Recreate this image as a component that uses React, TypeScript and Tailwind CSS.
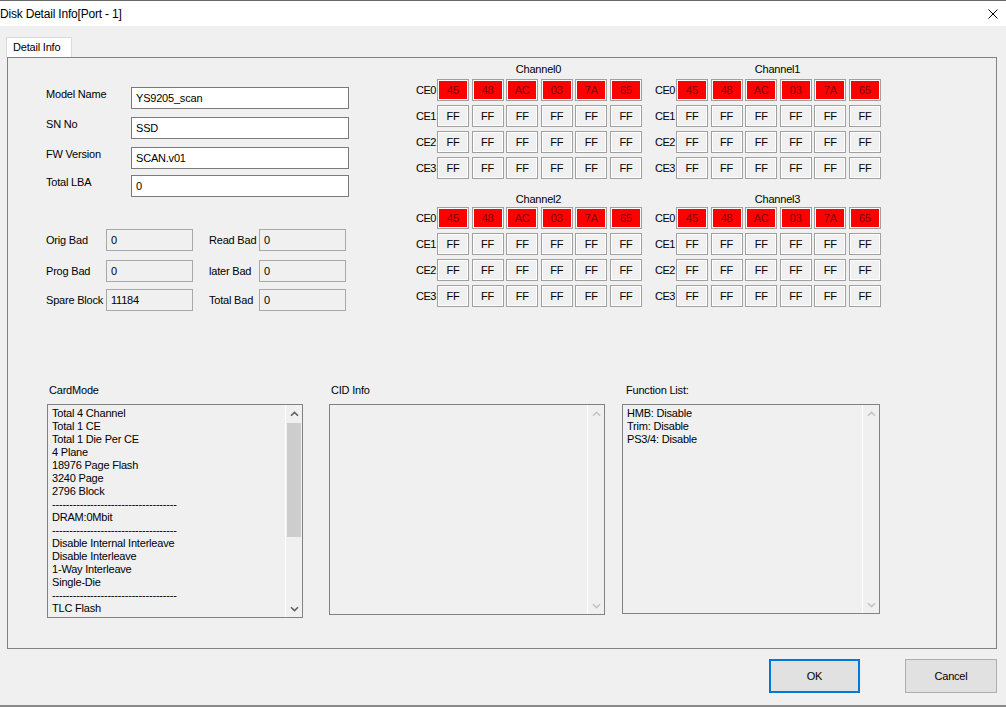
import React from 'react'

const CE_ROWS = ['CE0', 'CE1', 'CE2', 'CE3']
const CE0_VALUES = ['45', '48', 'AC', '03', '7A', '65']

const DASHES = '------------------------------------'

const CARD_MODE = [
  'Total 4 Channel',
  'Total 1 CE',
  'Total 1 Die Per CE',
  '4 Plane',
  '18976 Page Flash',
  '3240 Page',
  '2796 Block',
  DASHES,
  'DRAM:0Mbit',
  DASHES,
  'Disable Internal Interleave',
  'Disable Interleave',
  '1-Way Interleave',
  'Single-Die',
  DASHES,
  'TLC Flash',
]

const FUNCTION_LIST = ['HMB: Disable', 'Trim: Disable', 'PS3/4: Disable']

// -----------------------------------------------------------------------------
// Petites briques Win32
// -----------------------------------------------------------------------------

function Chevron({ down, disabled }: { down?: boolean; disabled?: boolean }) {
  return (
    <svg
      width="9"
      height="6"
      viewBox="0 0 9 6"
      className={disabled ? 'text-[#c4c4c4]' : 'text-[#606060]'}
    >
      <path
        d={down ? 'M1 1.2 L4.5 4.6 L8 1.2' : 'M1 4.8 L4.5 1.4 L8 4.8'}
        fill="none"
        stroke="currentColor"
        strokeWidth="1.6"
      />
    </svg>
  )
}

function Scrollbar({ disabled }: { disabled?: boolean }) {
  return (
    <div className="flex h-full w-[17px] shrink-0 flex-col border-l border-white bg-[#f0f0f0]">
      <div className="grid h-[17px] place-items-center">
        <Chevron disabled={disabled} />
      </div>
      <div className="flex-1 px-[1px]">
        {!disabled && <div className="mt-[1px] h-[114px] bg-[#cdcdcd]" />}
      </div>
      <div className="grid h-[17px] place-items-center">
        <Chevron down disabled={disabled} />
      </div>
    </div>
  )
}

function Cell({ value, red }: { value: string; red?: boolean }) {
  return (
    <div className="h-[22px] w-[32px] border border-[#a0a0a0] bg-white p-[1px]">
      <div
        className={[
          'flex h-full items-center justify-center leading-none',
          red ? 'bg-[#ff0000] text-[#7a0000]' : 'bg-[#f0f0f0] text-black',
        ].join(' ')}
      >
        {value}
      </div>
    </div>
  )
}

function ChannelBlock({ name, labelClass }: { name: string; labelClass: string }) {
  return (
    <div className="w-[226px]">
      <div className={['pl-[19px] text-center leading-[14px]', labelClass].join(' ')}>
        {name}
      </div>
      <div className="flex flex-col gap-[4px]">
        {CE_ROWS.map((ce, row) => (
          <div key={ce} className="flex items-center">
            <span className="w-[21px] leading-none tracking-[-0.5px]">{ce}</span>
            <div className="flex gap-[2.6px]">
              {CE0_VALUES.map((v, i) => (
                <Cell key={i} value={row === 0 ? v : 'FF'} red={row === 0} />
              ))}
            </div>
          </div>
        ))}
      </div>
    </div>
  )
}

function FieldRow({ label, value, className }: { label: string; value: string; className?: string }) {
  return (
    <div className={['flex items-start', className ?? ''].join(' ')}>
      <span className="w-[85px] leading-[14px]">{label}</span>
      <div className="flex h-[22px] w-[218px] items-center border border-[#7a7a7a] bg-white pl-[4px]">
        {value}
      </div>
    </div>
  )
}

function ReadOnlyBox({ value }: { value: string }) {
  return (
    <div className="flex h-[22px] w-[87px] items-center border border-[#a8a8a8] bg-[#f0f0f0] pl-[4px]">
      {value}
    </div>
  )
}

function ListGroup({
  label,
  lines,
  width,
  height,
  labelPad,
  scrollable,
}: {
  label: string
  lines: string[]
  width: string
  height: string
  labelPad: string
  scrollable?: boolean
}) {
  return (
    <div className="flex flex-col">
      <span className={['mb-[7px] leading-[14px]', labelPad].join(' ')}>{label}</span>
      <div className={['flex border border-[#828282] bg-[#f0f0f0]', width, height].join(' ')}>
        <div className="flex-1 overflow-hidden pl-[4px] pt-[2px]">
          {lines.map((l, i) => (
            <div key={i} className="whitespace-pre leading-[13px]">
              {l}
            </div>
          ))}
        </div>
        <Scrollbar disabled={!scrollable} />
      </div>
    </div>
  )
}

// -----------------------------------------------------------------------------
// Fenêtre
// -----------------------------------------------------------------------------

export default function App() {
  return (
    <div className="flex h-[707px] w-[1006px] flex-col overflow-hidden border-b-2 border-[#8a8a8a] bg-[#f0f0f0] font-['Liberation_Sans',Arial,sans-serif] text-[11px] tracking-[-0.2px] text-black">
      {/* Barre de titre */}
      <div className="flex h-[26px] shrink-0 items-center justify-between border-t border-[#6a6a6a] bg-white pr-[8px]">
        <span className="text-[12px] leading-none">Disk Detail Info[Port - 1]</span>
        <svg width="10" height="10" viewBox="0 0 10 10">
          <path d="M0.5 0.5 L9.5 9.5 M9.5 0.5 L0.5 9.5" stroke="#000" strokeWidth="1" />
        </svg>
      </div>

      {/* Onglet */}
      <div className="pt-[11px]">
        <div className="ml-[6px] flex h-[20px] w-[66px] items-center border border-b-0 border-[#d9d9d9] bg-white pl-[6px]">
          Detail Info
        </div>
      </div>

      {/* Panneau */}
      <div className="ml-[7px] flex h-[592px] w-[990px] flex-col border border-[#828282]">
        <div className="flex">
          {/* Colonne gauche : champs */}
          <div className="w-[408px] shrink-0 pl-[38px] pt-[29px]">
            <FieldRow label="Model Name" value="YS9205_scan" className="mb-[8px]" />
            <FieldRow label="SN No" value="SSD" className="mb-[8px]" />
            <FieldRow label="FW Version" value="SCAN.v01" className="mb-[6px]" />
            <FieldRow label="Total LBA" value="0" />

            <div className="mt-[32px] flex flex-col">
              {[
                ['Orig Bad', '0', 'Read Bad', '0', 'mb-[9px]'],
                ['Prog Bad', '0', 'later Bad', '0', 'mb-[7px]'],
                ['Spare Block', '11184', 'Total Bad', '0', ''],
              ].map(([l1, v1, l2, v2, mb]) => (
                <div key={l1} className={['flex items-center', mb].join(' ')}>
                  <span className="w-[60px]">{l1}</span>
                  <ReadOnlyBox value={v1} />
                  <span className="ml-[16px] w-[50px]">{l2}</span>
                  <ReadOnlyBox value={v2} />
                </div>
              ))}
            </div>
          </div>

          {/* Colonne droite : canaux */}
          <div className="grid grid-cols-[226px_226px] gap-x-[13px] pt-[4px]">
            <ChannelBlock name="Channel0" labelClass="mb-[3px]" />
            <ChannelBlock name="Channel1" labelClass="mb-[3px]" />
            <div className="mt-[9px]">
              <ChannelBlock name="Channel2" labelClass="mb-[1px]" />
            </div>
            <div className="mt-[9px]">
              <ChannelBlock name="Channel3" labelClass="mb-[1px]" />
            </div>
          </div>
        </div>

        {/* Listes du bas */}
        <div className="mt-[72px] flex items-start pl-[39px]">
          <ListGroup
            label="CardMode"
            lines={CARD_MODE}
            width="w-[256px]"
            height="h-[214px]"
            labelPad="pl-[2px]"
            scrollable
          />
          <div className="ml-[26px]">
            <ListGroup label="CID Info" lines={[]} width="w-[276px]" height="h-[211px]" labelPad="pl-[2px]" />
          </div>
          <div className="ml-[17px]">
            <ListGroup
              label="Function List:"
              lines={FUNCTION_LIST}
              width="w-[258px]"
              height="h-[210px]"
              labelPad="pl-[4px]"
            />
          </div>
        </div>
      </div>

      {/* Boutons */}
      <div className="mt-[10px] flex justify-end gap-[45px] pr-[9px]">
        <button
          type="button"
          className="h-[34px] w-[91px] border-2 border-[#0078d7] bg-[#e1e1e1]"
        >
          OK
        </button>
        <button
          type="button"
          className="h-[34px] w-[92px] border border-[#adadad] bg-[#e1e1e1]"
        >
          Cancel
        </button>
      </div>
    </div>
  )
}
